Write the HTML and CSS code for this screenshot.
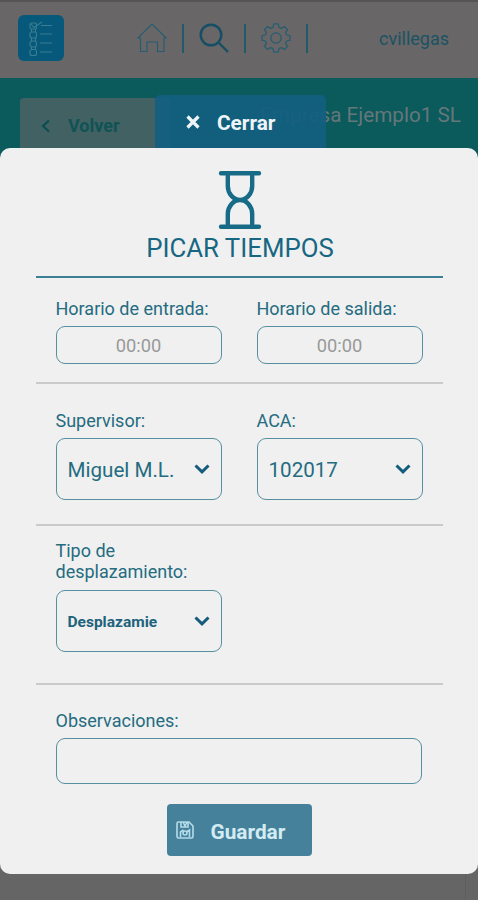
FILE: index.html
```html
<!DOCTYPE html>
<html lang="es">
<head>
  <meta charset="UTF-8">
  <meta name="viewport" content="width=device-width, initial-scale=1.0">
  <title>Picar tiempos</title>
  <link rel="stylesheet" href="styles.css">
</head>
<body>
  <div class="page">
    <header class="header">
      <svg class="logo" viewBox="0 0 46 46">
        <rect width="46" height="46" rx="6" fill="#06597a"/>
        <g fill="none" stroke="#3b7d92" stroke-width="1.1">
          <rect x="12" y="8" width="6.500" height="6" rx="1.500"/>
          <rect x="12" y="17" width="6.500" height="6" rx="2"/>
          <rect x="12" y="26" width="6.500" height="6" rx="2.500"/>
          <rect x="12" y="34.500" width="6.500" height="6" rx="2"/>
          <path d="M13 9l3 3.500 8-5.500M13.500 14v3M17.500 14v3M13.500 23v3M17.500 23v3M13.500 32v2.500M17.500 32v2.500M23 10.500h11M22 19h12M22 28h12M22 37h12"/>
        </g>
      </svg>
      <nav class="nav">
        <svg class="nav-icon" viewBox="0 0 30 30" fill="none" stroke="#245d70" stroke-width="1.1">
          <path d="M3.500 15H.8L15 1l14.200 14h-2.700M3.500 14.500v14h6.500V19h10.500v9.500h6.500v-14"/>
        </svg>
        <span class="divider"></span>
        <svg class="nav-icon search" viewBox="0 0 30 30" fill="none" stroke="#164f65" stroke-width="2.4">
          <circle cx="12" cy="12" r="10.300"/>
          <path d="M19.500 19.500L29 29"/>
        </svg>
        <span class="divider"></span>
        <svg class="nav-icon gear" viewBox="0 0 30 30" fill="none" stroke="#245d70" stroke-width="1.2" stroke-linejoin="round">
          <circle cx="15" cy="15" r="5.200"/>
          <path d="M25.600 12L29.100 12.800V17.200L25.600 18L24.600 20.400L26.500 23.400L23.400 26.500L20.400 24.600L18 25.600L17.200 29.100H12.800L12 25.600L9.600 24.600L6.600 26.500L3.500 23.400L5.400 20.400L4.400 18L.9 17.200V12.800L4.400 12L5.400 9.600L3.500 6.600L6.600 3.500L9.600 5.400L12 4.400L12.800 .9H17.200L18 4.400L20.400 5.400L23.400 3.500L26.500 6.600L24.600 9.600z"/>
        </svg>
        <span class="divider"></span>
      </nav>
      <span class="user">cvillegas</span>
    </header>
    <div class="band">
      <div class="back">
        <svg class="back-icon" viewBox="0 0 9 14"><path d="M8 1.500L2 7l6 5.500" fill="none" stroke="#0c4d51" stroke-width="2.200"/></svg>
        <span>Volver</span>
      </div>
      <span class="company">Empresa Ejemplo1 SL</span>
    </div>
    <div class="page-body"></div>
  </div>

  <div class="overlay">
    <button class="close">
      <svg class="close-icon" viewBox="0 0 14 14"><path d="M1.500 1.500l11 11M12.500 1.500l-11 11" stroke="#eef5f8" stroke-width="3.200"/></svg>
      <span>Cerrar</span>
    </button>
    <div class="modal">
      <svg class="hourglass" viewBox="0 0 44 60" fill="none" stroke="#176b87" stroke-width="4.400" stroke-linecap="round">
        <path d="M3 3.300h38M3 56.700h38M9.800 4v12c0 7.500 5.500 14 12.200 14s12.200-6.500 12.200-14V4M9.800 56V44c0-7.500 5.500-14 12.200-14s12.200 6.500 12.200 14v12"/>
      </svg>
      <h1 class="title">PICAR TIEMPOS</h1>

      <section class="row row-times">
        <div class="field">
          <label class="label">Horario de entrada:</label>
          <div class="input time">00:00</div>
        </div>
        <div class="field">
          <label class="label">Horario de salida:</label>
          <div class="input time">00:00</div>
        </div>
      </section>

      <section class="row row-selects">
        <div class="field">
          <label class="label">Supervisor:</label>
          <div class="input select">
            <span>Miguel M.L.</span>
            <svg class="chevron" viewBox="0 0 16 10"><path d="M1.500 1.500L8 7.800l6.500-6.300"/></svg>
          </div>
        </div>
        <div class="field">
          <label class="label">ACA:</label>
          <div class="input select">
            <span>102017</span>
            <svg class="chevron" viewBox="0 0 16 10"><path d="M1.500 1.500L8 7.800l6.500-6.300"/></svg>
          </div>
        </div>
      </section>

      <section class="row row-type">
        <div class="field">
          <label class="label">Tipo de desplazamiento:</label>
          <div class="input select small">
            <span>Desplazamie</span>
            <svg class="chevron" viewBox="0 0 16 10"><path d="M1.500 1.500L8 7.800l6.500-6.300"/></svg>
          </div>
        </div>
      </section>

      <section class="row row-notes">
        <div class="field wide">
          <label class="label">Observaciones:</label>
          <div class="input notes"></div>
        </div>
      </section>

      <button class="save">
        <svg class="save-icon" viewBox="0 0 18 18" fill="none" stroke="#b4dcea" stroke-width="1.600">
          <path d="M1 2.500Q1 1 2.500 1H13l4 4v10.500q0 1.500-1.500 1.500h-13Q1 17 1 15.500zM5 1v5h7V1M7 1l2 4 2-4M4.500 16v-5l3-2M13.500 16V9l-3 2"/>
          <circle cx="9" cy="12" r="2"/>
        </svg>
        <span>Guardar</span>
      </button>
    </div>
  </div>
</body>
</html>
```
FILE: styles.css
```css
* {
  box-sizing: border-box;
}
body {
  margin: 0;
  position: relative;
  height: 900px;
  overflow: hidden;
  font-family: Roboto, "Liberation Sans", sans-serif;
  color: #246c80;
}
button {
  border: 0;
  font-family: inherit;
}

/* page behind the dialog */
.page {
  display: flex;
  flex-direction: column;
  height: 900px;
  background: #656565;
}
.header {
  display: flex;
  align-items: center;
  height: 78px;
  padding: 0 29px 4px 18px;
  border-top: 2px solid #555;
  background: #686667;
}
.logo {
  width: 46px;
  height: 46px;
}
.nav {
  display: flex;
  align-items: center;
  margin-left: 73px;
}
.nav-icon {
  width: 30px;
  height: 30px;
}
.divider {
  width: 2px;
  height: 29px;
  margin: 0 15px;
  background: #22596b;
}
.user {
  margin-left: auto;
  font-size: 18px;
  color: #1b5364;
}
.band {
  display: flex;
  justify-content: space-between;
  height: 110px;
  padding: 20px 17px 0 20px;
  background: #0b5a5c;
}
.back {
  display: flex;
  align-items: center;
  gap: 18px;
  width: 150px;
  height: 55px;
  padding-left: 21px;
  border-radius: 4px 4px 0 0;
  background: #426163;
  font-size: 18px;
  font-weight: 700;
  color: #0f5355;
}
.back-icon {
  width: 9px;
  height: 14px;
}
.company {
  padding-top: 4px;
  font-size: 20.7px;
  line-height: 26px;
  color: #65777a;
}
.page-body {
  flex: 1;
  margin-right: 12px;
  border-right: 1px solid #5e5e5e;
}

/* dialog */
.overlay {
  position: absolute;
  top: 95px;
  left: 0;
  width: 478px;
}
.close {
  display: flex;
  align-items: center;
  gap: 17px;
  width: 171px;
  height: 53px;
  margin-left: 155px;
  padding: 2px 0 0 31px;
  border-radius: 5px 5px 0 0;
  background: rgba(19, 95, 128, 0.94);
  font-size: 20.8px;
  font-weight: 700;
  color: #eef5f8;
}
.close-icon {
  width: 14px;
  height: 14px;
  margin-top: -2px;
}
.modal {
  display: flex;
  flex-direction: column;
  align-items: center;
  height: 726px;
  padding: 22px 36px 0;
  border-radius: 10px;
  background: #f0f0f0;
}
.hourglass {
  flex: none;
  width: 44px;
  height: 60px;
  margin-left: 2px;
}
.title {
  margin: 3px 0 13px;
  padding-left: 2px;
  font-size: 25.8px;
  font-weight: 400;
  line-height: 30px;
  color: #176783;
}
.row {
  display: flex;
  gap: 35px;
  width: 407px;
  padding: 26px 20px 0;
  border-top: 2px solid #cacaca;
}
.row-times {
  height: 106px;
  padding-top: 20px;
  border-top-color: #3d8095;
}
.row-selects {
  height: 142px;
}
.row-type {
  height: 159px;
  padding-top: 14px;
}
.row-type .label {
  margin-bottom: 8px;
}
.row-notes {
  height: 121px;
  padding-top: 25px;
}
.field {
  width: 166px;
}
.field.wide {
  width: 366px;
}
.label {
  display: block;
  margin-bottom: 7px;
  font-size: 18px;
  line-height: 21px;
}
.input {
  display: flex;
  align-items: center;
  border: 1.5px solid #568fa1;
  border-radius: 9px;
}
.time {
  justify-content: center;
  height: 38px;
  font-size: 18.3px;
  color: #999;
}
.select {
  justify-content: space-between;
  height: 62px;
  padding: 2px 11px 0;
  font-size: 20.6px;
}
.select.small {
  font-size: 15.5px;
  font-weight: 700;
  color: #1d637b;
}
.notes {
  height: 46px;
}
.chevron {
  width: 16px;
  height: 10px;
  margin-top: -3px;
  fill: none;
  stroke: #145c7c;
  stroke-width: 3;
}
.save {
  display: flex;
  align-items: center;
  gap: 17px;
  width: 145px;
  height: 52px;
  padding: 3px 0 0 9px;
  border-radius: 4px;
  background: #45819a;
  font-size: 20.8px;
  font-weight: 700;
  color: #d3ecf4;
}
.save-icon {
  width: 18px;
  height: 18px;
  margin-top: -3px;
}
```
